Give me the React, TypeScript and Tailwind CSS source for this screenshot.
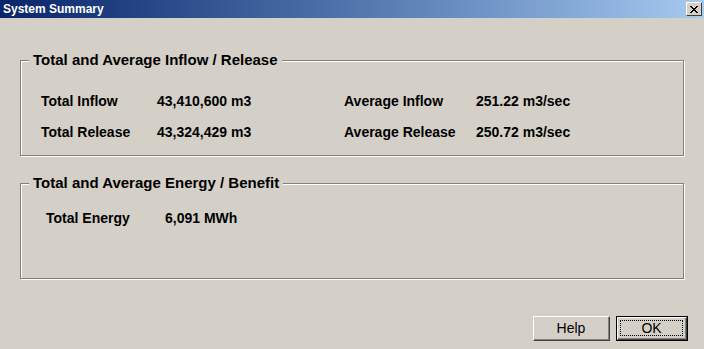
const font = { fontFamily: '"Liberation Sans", Arial, sans-serif' }

const GroupBox = ({ title, className, children }: { title: string; className: string; children: React.ReactNode }) => (
	<div className={`relative border border-[#808080] shadow-[inset_1px_1px_0_#ffffff,1px_1px_0_#ffffff] ${className}`}>
		{/* legend sits over the etched line */}
		<span className="absolute -top-[11px] left-[8px] bg-[#d4d0c8] px-[4px] text-[15px] font-bold leading-[20px] text-black">
			{title}
		</span>
		{children}
	</div>
)

const Btn = ({ label, isDefault, className }: { label: string; isDefault?: boolean; className: string }) =>
	isDefault ? (
		<button className={`h-[25px] border border-black bg-[#d4d0c8] ${className}`}>
			<div className="h-full w-full border-t border-l border-t-white border-l-white border-r border-b border-r-[#404040] border-b-[#404040]">
				<div className="flex h-full w-full items-center justify-center border-r border-b border-r-[#808080] border-b-[#808080] p-[2px]">
					<div className="flex h-full w-full items-center justify-center border border-dotted border-black text-[14px] leading-none text-black">
						{label}
					</div>
				</div>
			</div>
		</button>
	) : (
		<button className={`h-[25px] border-t border-l border-t-white border-l-white border-r border-b border-r-[#404040] border-b-[#404040] bg-[#d4d0c8] ${className}`}>
			<div className="flex h-full w-full items-center justify-center border-r border-b border-r-[#808080] border-b-[#808080] text-[14px] leading-none text-black">
				{label}
			</div>
		</button>
	)

export default function App() {
	return (
		<div className="flex h-[349px] w-[704px] flex-col overflow-hidden bg-[#d4d0c8]" style={font}>
			{/* title bar */}
			<div className="flex h-[18px] items-center justify-between bg-gradient-to-r from-[#0a246a] to-[#a6caf0] pl-[3px] pr-[2px]">
				<span className="text-[12px] font-bold leading-none text-white">System Summary</span>
				<div className="flex h-[14px] w-[16px] items-center justify-center border-t border-l border-t-white border-l-white border-r border-b border-r-[#404040] border-b-[#404040] bg-[#d4d0c8]">
					<svg width="8" height="7" viewBox="0 0 8 7" shapeRendering="crispEdges">
						<path d="M0 0h2v1h-2zM6 0h2v1h-2zM1 1h2v1h-2zM5 1h2v1h-2zM2 2h4v1h-4zM3 3h2v1h-2zM2 4h4v1h-4zM1 5h2v1h-2zM5 5h2v1h-2zM0 6h2v1h-2zM6 6h2v1h-2z" fill="#000" />
					</svg>
				</div>
			</div>

			<div className="flex flex-col px-[20px] pt-[42px]">
				<GroupBox title="Total and Average Inflow / Release" className="h-[96px] w-[664px]">
					<div className="grid grid-cols-[116px_187px_132px_auto] gap-y-[11px] pl-[20px] pt-[30px] text-[14px] font-bold leading-[20px] text-black">
						<span>Total Inflow</span>
						<span>43,410,600 m3</span>
						<span>Average Inflow</span>
						<span>251.22 m3/sec</span>
						<span>Total Release</span>
						<span>43,324,429 m3</span>
						<span>Average Release</span>
						<span>250.72 m3/sec</span>
					</div>
				</GroupBox>

				<GroupBox title="Total and Average Energy / Benefit" className="mt-[27px] h-[96px] w-[664px]">
					<div className="grid grid-cols-[119px_auto] pl-[25px] pt-[24px] text-[14px] font-bold leading-[20px] text-black">
						<span>Total Energy</span>
						<span>6,091 MWh</span>
					</div>
				</GroupBox>
			</div>

			<div className="mt-[37px] flex justify-end gap-[6px] pr-[16px]">
				<Btn label="Help" className="w-[77px]" />
				<Btn label="OK" isDefault className="w-[72px]" />
			</div>
		</div>
	)
}
